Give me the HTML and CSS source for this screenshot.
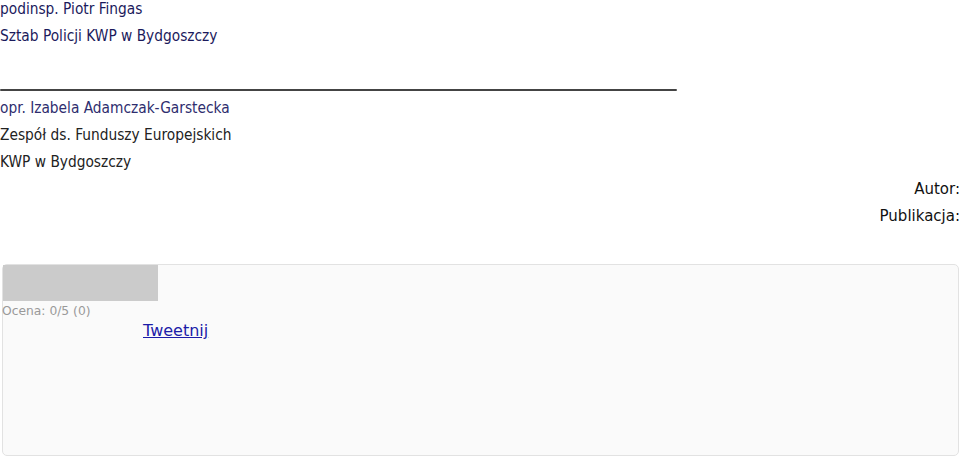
FILE: index.html
```html
<!DOCTYPE html>
<html lang="pl">
<head>
  <meta charset="UTF-8">
  <title>Artykuł - KWP w Bydgoszczy</title>
  <link rel="stylesheet" href="styles.css">
</head>
<body>

  <div class="article-text">
    <p class="author">podinsp. Piotr Fingas</p>
    <p class="author">Sztab Policji KWP w Bydgoszczy</p>

    <hr class="rule">

    <p class="author light">opr. Izabela Adamczak-Garstecka</p>
    <p>Zespół ds. Funduszy Europejskich</p>
    <p>KWP w Bydgoszczy</p>
  </div>

  <div class="meta">
    <p>Autor:</p>
    <p>Publikacja:</p>
  </div>

  <div class="rating-box">
    <div class="stars"></div>
    <div class="rating-text">Ocena: 0/5 (0)</div>
    <a href="#" class="tweet">Tweetnij</a>
  </div>

</body>
</html>
```

FILE: styles.css
```css
body {
  margin: 0;
  font-family: "DejaVu Sans", sans-serif;
  color: #222;
}

p {
  margin: 0 0 9px;
  line-height: 18px;
}

.article-text {
  font-family: "DejaVu Sans Condensed", "DejaVu Sans", sans-serif;
  font-size: 15.3px;
}

.author {
  color: #1b1a5c;
}

.light {
  color: #2e2d6e;
}

.rule {
  width: 677px;
  height: 2px;
  margin: 44px 0 8px;
  border: none;
  border-radius: 1px;
  background-color: #444;
}

.meta {
  text-align: right;
  font-size: 15px;
  color: #111;
}

.rating-box {
  height: 190px;
  margin: 39px 1px 0 2px;
  border: 1px solid #e2e2e2;
  border-radius: 5px;
  background-color: #fafafa;
}

.stars {
  width: 155px;
  height: 36px;
  background-color: #cbcbcb;
}

.rating-text {
  margin-left: -1px;
  font-size: 12.3px;
  line-height: 20px;
  color: #999;
}

.tweet {
  display: inline-block;
  margin: 0 0 0 140px;
  font-size: 16px;
  line-height: 20px;
  color: #1c1ca8;
}
```
